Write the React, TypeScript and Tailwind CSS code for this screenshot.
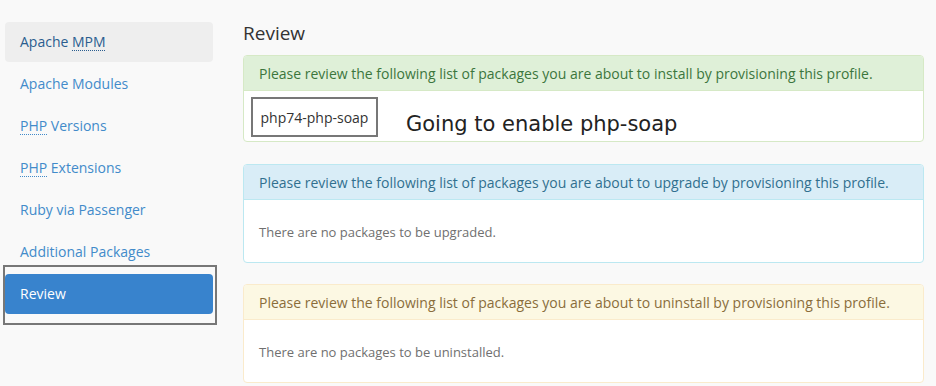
const navItems = [
  { label: "Apache ", abbr: "MPM", pre: "", hover: true },
  { label: "Apache Modules" },
  { label: " Versions", pre: "PHP" },
  { label: " Extensions", pre: "PHP" },
  { label: "Ruby via Passenger" },
  { label: "Additional Packages" },
];

function Panel({
  tone,
  text,
  children,
}: {
  tone: "green" | "blue" | "yellow";
  text: string;
  children: React.ReactNode;
}) {
  const styles = {
    green: "border-[#d6e9c6] bg-[#dff0d8] text-[#3c763d]",
    blue: "border-[#bce8f1] bg-[#d9edf7] text-[#31708f]",
    yellow: "border-[#faebcc] bg-[#fcf8e3] text-[#8a6d3b]",
  }[tone];
  const border = {
    green: "border-[#d6e9c6]",
    blue: "border-[#bce8f1]",
    yellow: "border-[#faebcc]",
  }[tone];
  return (
    <div className={`rounded-[4px] border bg-white overflow-hidden ${border}`}>
      <div className={`h-[35px] border-b px-[15px] flex items-center text-[14px] ${styles}`}>
        {text}
      </div>
      {children}
    </div>
  );
}

export default function App() {
  return (
    <div
      className="relative w-[936px] h-[386px] overflow-hidden bg-[#f9f9f9] flex"
      style={{ fontFamily: '"Open Sans", "Liberation Sans", sans-serif' }}
    >
      {/* sidebar */}
      <div className="w-[213px] shrink-0 pl-[5px] pt-[22px] flex flex-col gap-[2px]">
        {navItems.map((item, i) => (
          <div
            key={i}
            className={`h-[40px] rounded-[4px] pl-[15px] pb-[2px] flex items-center text-[14px] ${
              item.hover ? "bg-[#eeeeee] text-[#2a5d8f]" : "text-[#428bca]"
            }`}
          >
            {item.pre && (
              <span className="underline decoration-dotted decoration-[1px] underline-offset-[3px]">
                {item.pre}
              </span>
            )}
            <span className="whitespace-pre">{item.label}</span>
            {item.abbr && (
              <span className="underline decoration-dotted decoration-[1px] underline-offset-[3px]">
                {item.abbr}
              </span>
            )}
          </div>
        ))}
        <div className="h-[40px] rounded-[4px] pl-[15px] pb-[2px] flex items-center text-[14px] bg-[#3883cd] text-white">
          Review
        </div>
      </div>

      {/* annotation outline */}
      <div className="absolute left-[3px] top-[265px] w-[214px] h-[60px] border-2 border-[#777777]" />

      {/* main */}
      <div className="flex-1 pl-[30px] pr-[12px] pt-[20px] flex flex-col">
        <h2 className="text-[19px] leading-[26px] text-[#333333] mb-[9px]">Review</h2>

        <Panel
          tone="green"
          text="Please review the following list of packages you are about to install by provisioning this profile."
        >
          <div className="h-[50px] pl-[7px] pt-[6px] flex items-start">
            <div className="h-[40px] w-[127px] border-2 border-[#777777] flex items-center justify-center text-[14px] text-[#333333]">
              php74-php-soap
            </div>
            <span
              className="ml-[28px] mt-[15px] text-[21px] leading-[24px] text-[#222222]"
              style={{ fontFamily: '"DejaVu Sans", sans-serif' }}
            >
              Going to enable php-soap
            </span>
          </div>
        </Panel>

        <div className="h-[22px]" />
        <Panel
          tone="blue"
          text="Please review the following list of packages you are about to upgrade by provisioning this profile."
        >
          <div className="h-[62px] px-[15px] pt-[23px] text-[13px] leading-[18px] text-[#707070]">
            There are no packages to be upgraded.
          </div>
        </Panel>

        <div className="h-[21px]" />
        <Panel
          tone="yellow"
          text="Please review the following list of packages you are about to uninstall by provisioning this profile."
        >
          <div className="h-[62px] px-[15px] pt-[23px] text-[13px] leading-[18px] text-[#707070]">
            There are no packages to be uninstalled.
          </div>
        </Panel>
      </div>
    </div>
  );
}
